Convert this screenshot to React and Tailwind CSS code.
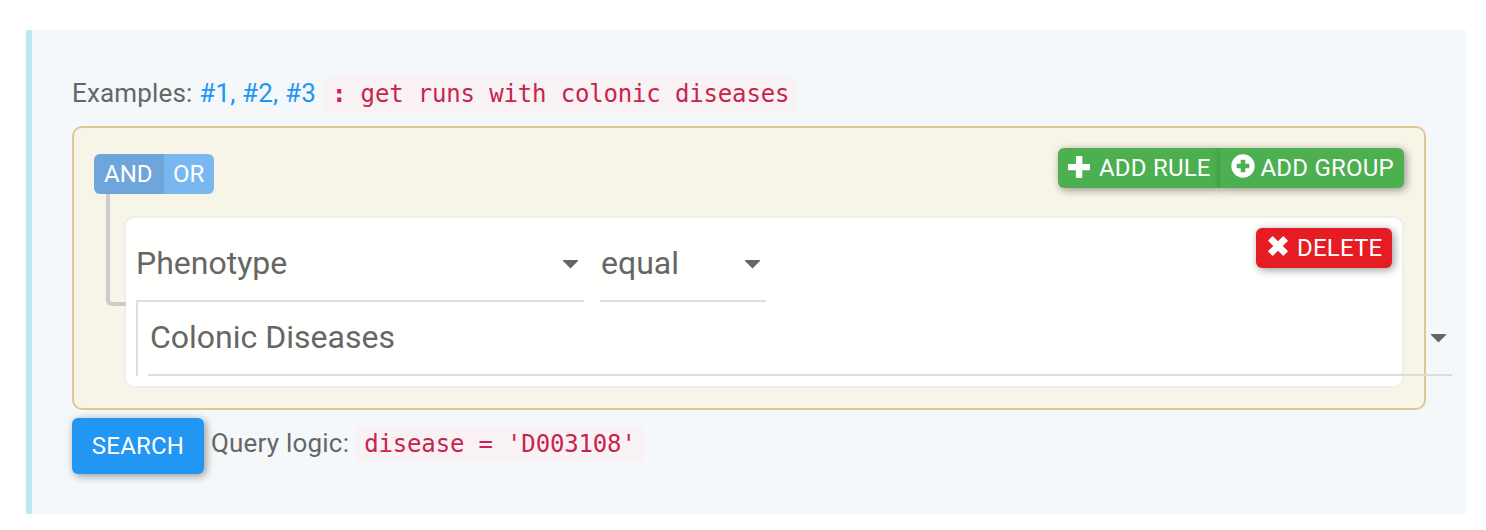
const PlusIcon = () => (
  <svg className="h-[22px] w-[22px]" viewBox="0 0 22 22" fill="currentColor">
    <path d="M8.9 0h4.4q1 0 1 1v7h6.7q1 0 1 1v4.2q0 1-1 1h-6.7V21q0 1-1 1H8.9q-1 0-1-1v-6.8H1q-1 0-1-1V9q0-1 1-1h6.9V1q0-1 1-1z" />
  </svg>
);

const PlusSignIcon = () => (
  <svg className="h-6 w-6" viewBox="0 0 24 24" fill="currentColor">
    <path
      fillRule="evenodd"
      d="M12 .3a11.7 11.7 0 1 1 0 23.4a11.7 11.7 0 0 1 0-23.4zM10.3 5.7q-.6 0-.6.6v3.4H6.3q-.6 0-.6.6v3.4q0 .6.6.6h3.4v3.4q0 .6.6.6h3.4q.6 0 .6-.6v-3.4h3.4q.6 0 .6-.6v-3.4q0-.6-.6-.6h-3.4V6.3q0-.6-.6-.6z"
    />
  </svg>
);

const RemoveIcon = () => (
  <svg className="h-5 w-5" viewBox="0 0 20 20" fill="currentColor">
    <path d="M5.2.4L10 5.2 14.8.4q.5-.4 1 0l3.8 3.8q.4.5 0 1L14.8 10l4.8 4.8q.4.5 0 1l-3.8 3.8q-.5.4-1 0L10 14.8l-4.8 4.8q-.5.4-1 0L.4 15.8q-.4-.5 0-1L5.2 10 .4 5.2q-.4-.5 0-1L4.2.4q.5-.4 1 0z" />
  </svg>
);

const Caret = () => (
  <svg className="block h-[9px] w-[15px] shrink-0 text-[#666666]" viewBox="0 0 15 9" fill="currentColor">
    <path d="M0 0h15v1L7.5 8.5 0 1z" />
  </svg>
);

const Code = ({ children }) => (
  <code className="h-9 whitespace-pre rounded-md bg-[#f9f2f4] px-2 font-['DejaVu_Sans_Mono',monospace] text-[24px] leading-9 tracking-[-0.16px] text-[#c7254e]">
    {children}
  </code>
);

export default function App() {
  return (
    <main className="h-[530px] overflow-hidden bg-white pl-[26px] pt-[30px] font-['Roboto',sans-serif] text-[26px] tracking-[0.2px] text-[#666666]">
      <section className="h-[484px] w-[1440px] border-l-[6px] border-[#bce8f1] bg-[#f4f8fb] pl-10 pt-[46px]">
        <div className="flex h-[50px] items-start">
          <span className="-mt-px w-[244px] whitespace-pre leading-9 tracking-[0.17px]">
            Examples: <a className="text-[#2196f3]">#1, </a>
            <a className="text-[#2196f3]">#2, </a>
            <a className="text-[#2196f3]">#3</a>
          </span>
          <span className="w-2" />
          <Code><span className="font-bold">:</span> get runs with colonic diseases</Code>
        </div>

        <div className="h-[284px] w-[1354px] rounded-[10px] border-2 border-[#dcc896] bg-[#f7f5e7] px-5 pt-5">
          <div className="flex h-[68px] items-start justify-between text-[24px] leading-10 text-white">
            <div className="mt-1.5 flex h-10 overflow-hidden rounded-md tracking-normal">
              <button className="w-[70px] bg-[#6ea6db] pl-2.5 text-left">AND</button>
              <button className="w-[50px] bg-[#79b7f0] pl-[9px] text-left">OR</button>
            </div>
            <div className="flex h-10">
              <button className="flex w-[162px] items-center gap-[9px] rounded-l-md bg-[#4caf50] pl-2.5 shadow-[2px_2px_8px_rgba(0,0,0,0.4)]">
                <span className="-mt-0.5"><PlusIcon /></span>
                <span>ADD RULE</span>
              </button>
              <button className="flex w-[184px] items-center gap-1.5 rounded-r-md bg-[#4caf50] pl-[10.5px] shadow-[2px_2px_8px_rgba(0,0,0,0.4)]">
                <span className="-mt-1"><PlusSignIcon /></span>
                <span>ADD GROUP</span>
              </button>
            </div>
          </div>

          <div className="flex">
            <div className="z-10 -mr-0.5 -mt-[22px] ml-3 h-28 w-5 shrink-0 rounded-bl-md border-b-4 border-l-4 border-[#cccccc]" />
            <div className="flex h-[172px] w-[1280px] shrink-0 flex-col rounded-[10px] border-2 border-[#eeeeee] bg-[#fffffd] pl-2.5 pt-2.5">
              <div className="flex h-[72px] items-start tracking-normal">
                <div className="flex h-[74px] w-[448px] items-center justify-between border-b-2 border-[#dddddd] pr-1.5 text-[32px]">
                  <span className="-mt-0.5">Phenotype</span>
                  <Caret />
                </div>
                <div className="ml-4 flex h-[74px] w-[166px] items-center justify-between border-b-2 border-[#dddddd] pl-px pr-1.5 text-[32px]">
                  <span className="-mt-0.5">equal</span>
                  <Caret />
                </div>
                <button className="ml-[490px] flex h-10 w-[136px] items-center gap-[9px] rounded-md bg-[#e51c23] pl-3 text-[24px] tracking-[0.2px] text-white shadow-[2px_2px_8px_rgba(0,0,0,0.4)]">
                  <span className="-mt-1"><RemoveIcon /></span>
                  <span>DELETE</span>
                </button>
              </div>
              <div className="flex h-[76px] w-[1316px] border-l-2 border-[#dddddd] pl-2.5 tracking-normal">
                <div className="flex w-[1304px] items-center justify-between border-b-2 border-[#dddddd] pl-0.5 pr-1.5 text-[32px]">
                  <span>Colonic Diseases</span>
                  <span className="mt-[3px]"><Caret /></span>
                </div>
              </div>
            </div>
          </div>
        </div>

        <div className="mt-2 flex items-start">
          <button className="h-14 w-[132px] rounded-md bg-[#2196f3] text-[24px] leading-[56px] text-white shadow-[2px_2px_8px_rgba(0,0,0,0.4)]">
            SEARCH
          </button>
          <span className="ml-[7px] mt-[7px] leading-9">Query logic:</span>
          <span className="ml-[7px] mt-2 flex"><Code>disease = 'D003108'</Code></span>
        </div>
      </section>
    </main>
  );
}
